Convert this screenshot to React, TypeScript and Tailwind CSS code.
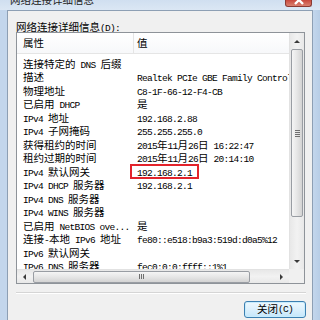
import React from "react";

const CJK_RE = /[\u2e80-\u9fff\uff00-\uffef]/;
const SPLIT_RE = /[\u2e80-\u9fff\uff00-\uffef]+|[^\u2e80-\u9fff\uff00-\uffef]+/g;

function T({ s }: { s: string }) {
  const parts = s.match(SPLIT_RE) ?? [];
  return (
    <>
      {parts.map((p, i) =>
        CJK_RE.test(p) ? (
          <span key={i} className="font-['Noto_Sans_CJK_SC',sans-serif] text-[10.5px]">
            {p}
          </span>
        ) : (
          <span
            key={i}
            className="font-['Liberation_Mono',monospace] text-[9.5px] tracking-[-0.7px] whitespace-pre"
          >
            {p}
          </span>
        )
      )}
    </>
  );
}

const rows: [string, string][] = [
  ["连接特定的 DNS 后缀", ""],
  ["描述", "Realtek PCIe GBE Family Controller"],
  ["物理地址", "C8-1F-66-12-F4-CB"],
  ["已启用 DHCP", "是"],
  ["IPv4 地址", "192.168.2.88"],
  ["IPv4 子网掩码", "255.255.255.0"],
  ["获得租约的时间", "2015年11月26日 16:22:47"],
  ["租约过期的时间", "2015年11月26日 20:14:10"],
  ["IPv4 默认网关", "192.168.2.1"],
  ["IPv4 DHCP 服务器", "192.168.2.1"],
  ["IPv4 DNS 服务器", ""],
  ["IPv4 WINS 服务器", ""],
  ["已启用 NetBIOS ove...", "是"],
  ["连接-本地 IPv6 地址", "fe80::e518:b9a3:519d:d0a5%12"],
  ["IPv6 默认网关", ""],
  ["IPv6 DNS 服务器", "fec0:0:0:ffff::1%1"],
];

function Tri({ dir }: { dir: "up" | "down" | "left" | "right" }) {
  const vert = dir === "up" || dir === "down";
  const pts =
    dir === "up"
      ? "0,4 3,1 6,4"
      : dir === "down"
      ? "0,1 6,1 3,4"
      : dir === "left"
      ? "4,0 4,6 1,3"
      : "1,0 1,6 4,3";
  return (
    <svg width={vert ? 6 : 5} height={vert ? 5 : 6} viewBox={vert ? "0 0 6 5" : "0 0 5 6"}>
      <polygon points={pts} fill="#3a3a3a" />
    </svg>
  );
}

export default function App() {
  return (
    <div className="w-[320px] h-[320px] overflow-hidden bg-[#c3d6ec] flex flex-col select-none text-black">
      {/* Title bar */}
      <div className="h-[10px] shrink-0 flex bg-gradient-to-b from-[#d0dff0] to-[#dbe7f4] overflow-hidden">
        <div className="pl-[10px] -mt-[11px] h-[18px] leading-[18px] text-[#222] whitespace-nowrap">
          <T s="网络连接详细信息" />
        </div>
        <div className="ml-auto mr-[8px] w-[27px] h-[7px] rounded-b-[3px] border border-t-0 border-[#8a3a33] bg-gradient-to-b from-[#c8463c] to-[#d9806f] flex justify-center overflow-hidden">
          <svg width="12" height="12" viewBox="0 0 12 12" className="-mt-[6px]">
            <path d="M2 2 L10 10 M10 2 L2 10" stroke="#ffffff" strokeWidth="2.4" />
          </svg>
        </div>
      </div>

      <div className="flex flex-1 min-h-0">
        <div className="w-[7px] shrink-0 bg-[#c3d6ec]" />
        <div className="w-[306px] shrink-0 border border-b-0 border-[#8d9fb4] bg-[#f0f0f0] flex flex-col">
          {/* Label */}
          <div className="pl-[8px] pt-[8px] h-[20px] leading-[12px] whitespace-nowrap">
            <T s="网络连接详细信息(D):" />
          </div>

          {/* List box */}
          <div className="ml-[8px] mt-[1px] w-[289px] h-[252px] border border-[#8e9399] bg-white flex flex-col">
            <div className="flex h-[236px]">
              {/* content */}
              <div className="w-[272px] overflow-hidden flex flex-col">
                <div className="h-[21px] shrink-0 flex border-b border-[#e5e5e5] bg-gradient-to-b from-white to-[#f7f8fa]">
                  <div className="w-[117px] shrink-0 pl-[6px] border-r border-[#e5e5e5] flex items-center leading-none">
                    <T s="属性" />
                  </div>
                  <div className="pl-[3px] flex items-center leading-none">
                    <T s="值" />
                  </div>
                </div>
                <div className="mt-[1px] flex flex-col">
                  {rows.map(([k, v], i) => (
                    <div key={i} className="relative h-[13.5px] shrink-0 flex items-center leading-none whitespace-nowrap">
                      <div className="w-[117px] shrink-0 pl-[6px] overflow-hidden">
                        <T s={k} />
                      </div>
                      <div className="pl-[3px] flex-1 min-w-0">
                        <T s={v} />
                      </div>
                      {i === 8 && (
                        <div className="absolute left-[113px] top-[1px] w-[69px] h-[15px] border-2 border-[#e3232b]" />
                      )}
                    </div>
                  ))}
                </div>
              </div>
              {/* vertical scrollbar */}
              <div className="w-[15px] shrink-0 bg-gradient-to-r from-[#e8e8e8] via-[#f2f2f2] to-[#e8e8e8] border-l border-[#e2e2e2] flex flex-col">
                <div className="h-[16px] shrink-0 flex items-center justify-center">
                  <Tri dir="up" />
                </div>
                <div className="mx-[1px] h-[168px] shrink-0 rounded-[2px] border border-[#999da3] bg-gradient-to-r from-[#f5f5f5] via-[#e6e6e6] to-[#d3d3d3] flex flex-col items-center justify-center gap-[1px]">
                  <div className="w-[5px] h-[1px] bg-[#6f6f6f]" />
                  <div className="w-[5px] h-[1px] bg-[#6f6f6f]" />
                  <div className="w-[5px] h-[1px] bg-[#6f6f6f]" />
                  <div className="w-[5px] h-[1px] bg-[#6f6f6f]" />
                </div>
                <div className="flex-1" />
                <div className="h-[16px] shrink-0 flex items-center justify-center">
                  <Tri dir="down" />
                </div>
              </div>
            </div>
            {/* horizontal scrollbar */}
            <div className="flex h-[14px] shrink-0">
              <div className="w-[272px] shrink-0 bg-gradient-to-b from-[#e8e8e8] via-[#f2f2f2] to-[#e8e8e8] border-t border-[#e2e2e2] flex items-center">
                <div className="w-[15px] shrink-0 flex items-center justify-center">
                  <Tri dir="left" />
                </div>
                <div className="ml-[1px] w-[217px] h-[12px] shrink-0 rounded-[2px] border border-[#999da3] bg-gradient-to-b from-[#f5f5f5] via-[#e6e6e6] to-[#d3d3d3] flex items-center justify-center gap-[1px]">
                  <div className="w-[1px] h-[5px] bg-[#6f6f6f]" />
                  <div className="w-[1px] h-[5px] bg-[#6f6f6f]" />
                  <div className="w-[1px] h-[5px] bg-[#6f6f6f]" />
                </div>
                <div className="flex-1" />
                <div className="w-[15px] shrink-0 flex items-center justify-center">
                  <Tri dir="right" />
                </div>
              </div>
              <div className="flex-1 bg-[#f0f0f0]" />
            </div>
          </div>

          {/* separator */}
          <div className="ml-[8px] mt-[8px] w-[290px] h-[2px] border-t border-[#d5d5d5] border-b border-b-white" />

          {/* button */}
          <div className="flex justify-end pr-[6px] mt-[7px]">
            <div className="w-[62px] h-[17px] rounded-[3px] border border-[#3c7fb1] bg-gradient-to-b from-[#eef8fe] via-[#dcf0fc] to-[#c4e6fb] shadow-[inset_0_0_0_1px_#c8ecfc] flex items-center justify-center leading-none">
              <T s="关闭(C)" />
            </div>
          </div>
        </div>
        <div className="flex-1 bg-gradient-to-r from-[#c3d6ec] to-[#b7cde6]" />
      </div>
    </div>
  );
}
